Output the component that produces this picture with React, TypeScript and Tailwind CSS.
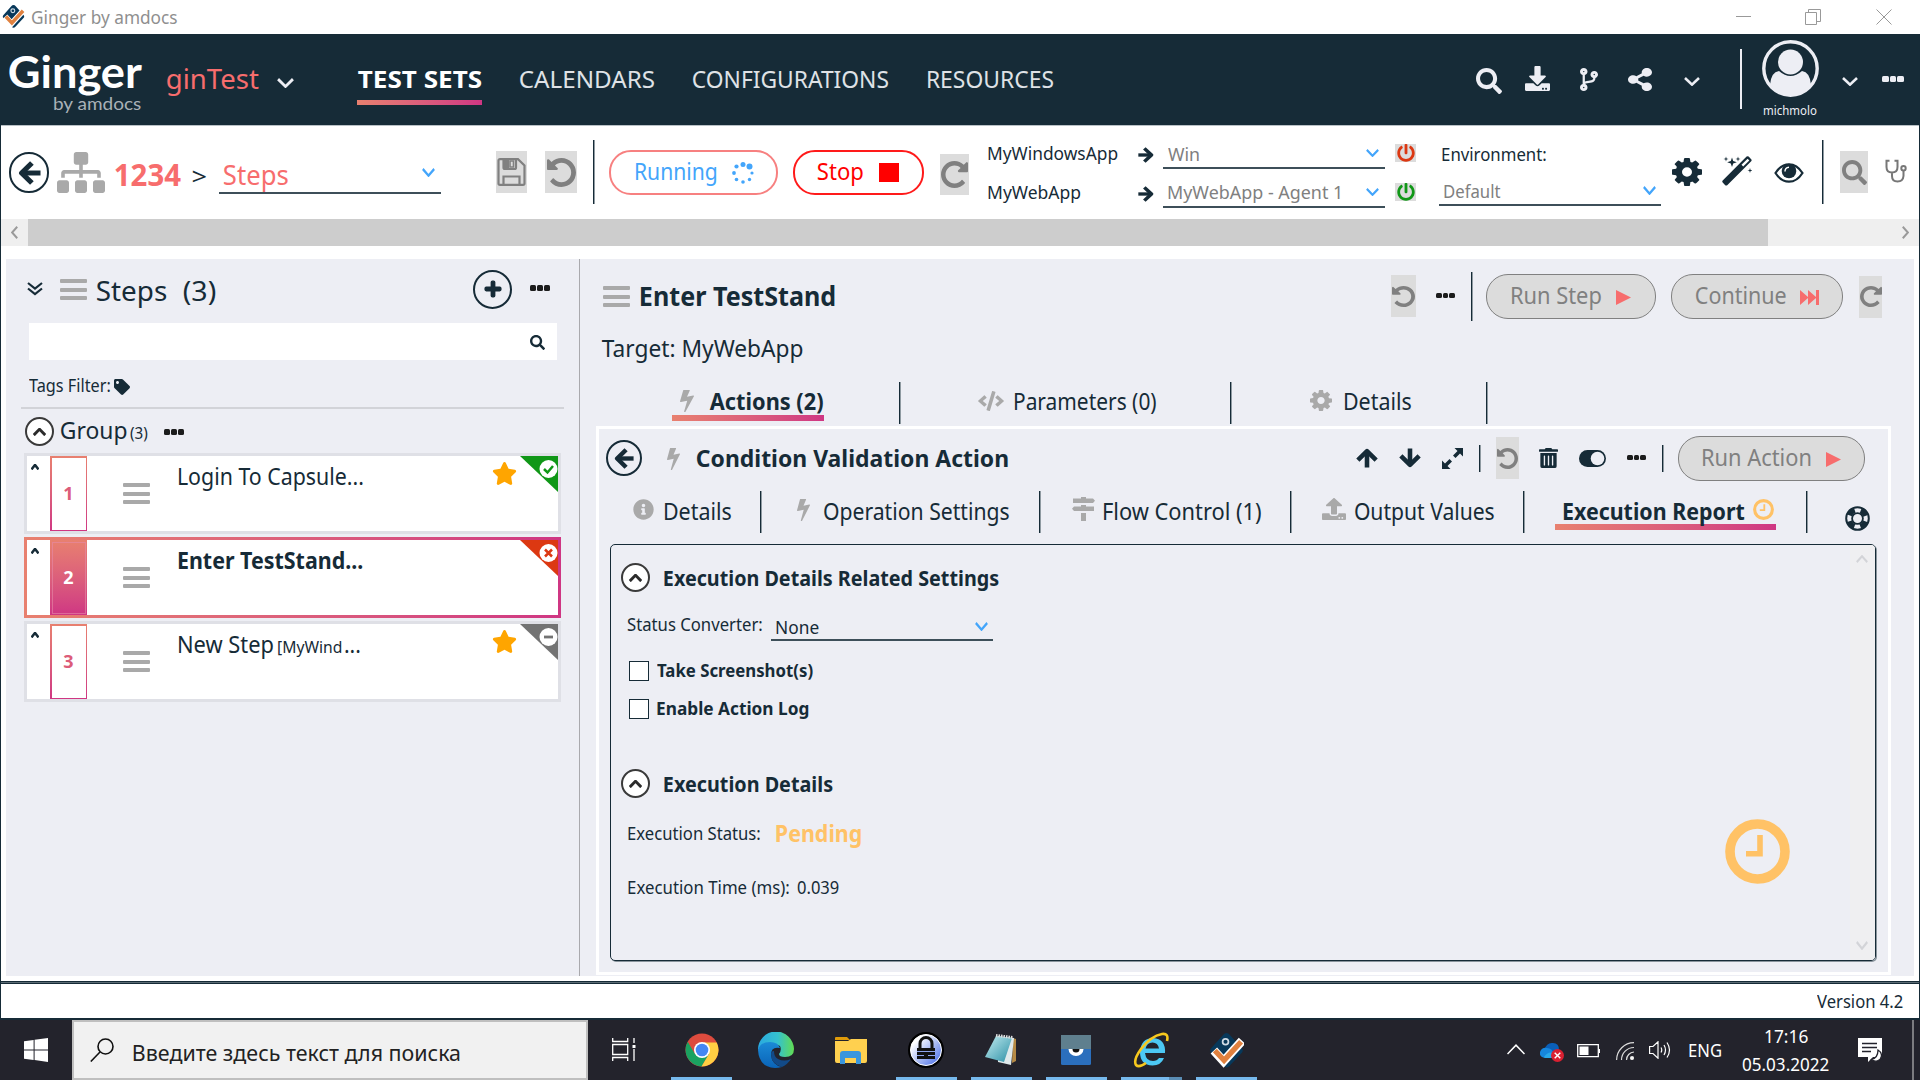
import { useLayoutEffect, useRef, type ReactNode } from "react";
import {
  FaCode, FaCodeBranch, FaDownload, FaInfoCircle,
  FaPlus, FaPowerOff, FaSearch, FaShareAlt, FaSitemap, FaStar,
  FaTag, FaTrashAlt, FaUpload,
} from "react-icons/fa";

type P = { className?: string };

/* Single line of text whose glyphs span exactly the width of its box. */
function Fit({ className = "", children }: { className?: string; children: string }) {
  const box = useRef<HTMLSpanElement>(null);
  const ink = useRef<HTMLSpanElement>(null);
  useLayoutEffect(() => {
    const b = box.current, s = ink.current;
    if (!b || !s) return;
    const ctx = document.createElement("canvas").getContext("2d");
    if (!ctx) return;
    const cs = getComputedStyle(s);
    ctx.font = `${cs.fontWeight} ${cs.fontSize} ${cs.fontFamily}`;
    const m = ctx.measureText(children);
    const k = b.getBoundingClientRect().width / (m.actualBoundingBoxLeft + m.actualBoundingBoxRight);
    const nudge = parseFloat(cs.fontSize) > 19 ? 0.8 : 0;
    s.style.transform = `translate(${m.actualBoundingBoxLeft * k + nudge}px, ${nudge}px) scaleX(${k})`;
  }, [children]);
  return (
    <span ref={box} className={`block shrink-0 leading-none whitespace-nowrap ${className}`}>
      <span ref={ink} className="inline-block origin-left align-top">{children}</span>
    </span>
  );
}

function Chevron({ className = "", w = 2.6 }: P & { w?: number }) {
  return (
    <svg viewBox="0 0 16 9" preserveAspectRatio="none" className={className} fill="none" stroke="currentColor" strokeWidth={w}>
      <path d="M1 1l7 6.6L15 1" />
    </svg>
  );
}

/* Heavy arrow with rounded ends, pointing left. */
function Arrow({ className = "" }: P) {
  return (
    <svg viewBox="0 0 24 26" preserveAspectRatio="none" className={className} fill="none" stroke="currentColor" strokeWidth="5.4" strokeLinejoin="round">
      <path d="M3.500 13H23.500" /><path d="M14.500 2.200L3.800 13l10.700 10.800" />
    </svg>
  );
}

function Undo({ className = "" }: P) {
  return (
    <svg viewBox="0 128 1536 1536" preserveAspectRatio="none" className={className} fill="currentColor">
      <path d="M1536 896q0 156-61 298t-164 245-245 164-298 61q-172 0-327-72.5t-264-204.5q-7-10-6.5-22.5t8.5-20.5l137-138q10-9 25-9 16 2 23 12 73 95 179 147t225 52q104 0 198.5-40.5t163.5-109.5 109.5-163.5 40.5-198.5-40.5-198.5-109.5-163.5-163.5-109.5-198.5-40.5q-98 0-188 35.5t-160 101.5l137 138q31 30 14 69-17 40-59 40h-448q-26 0-45-19t-19-45v-448q0-42 40-59 39-17 69 14l130 129q107-101 244.5-156.5t284.5-55.5q156 0 298 61t245 164 164 245 61 298z" />
    </svg>
  );
}

function Gear({ className = "" }: P) {
  return (
    <svg viewBox="0 128 1536 1536" preserveAspectRatio="none" className={className} fill="currentColor">
      <path d="M1024 896q0-106-75-181t-181-75-181 75-75 181 75 181 181 75 181-75 75-181zm512-109v222q0 12-8 23t-20 13l-185 28q-19 54-39 91 35 50 107 138 10 12 10 25t-9 23q-27 37-99 108t-94 71q-12 0-26-9l-138-108q-44 23-91 38-16 136-29 186-7 28-36 28h-222q-14 0-24.5-8.5t-11.5-21.5l-28-184q-49-16-90-37l-141 107q-10 9-25 9-14 0-25-11-126-114-165-168-7-10-7-23 0-12 8-23 15-21 51-66.5t54-70.5q-27-50-41-99l-183-27q-13-2-21-12.5t-8-23.5v-222q0-12 8-23t19-13l186-28q14-46 39-92-40-57-107-138-10-12-10-24 0-10 9-23 26-36 98.5-107.5t94.5-71.5q13 0 26 10l138 107q44-23 91-38 16-136 29-186 7-28 36-28h222q14 0 24.5 8.5t11.5 21.5l28 184q49 16 90 37l142-107q9-9 24-9 13 0 25 10 129 119 165 170 7 8 7 22 0 12-8 23-15 21-51 66.5t-54 70.5q26 50 41 98l183 28q13 2 21 12.5t8 23.5z" />
    </svg>
  );
}

function Bolt({ className = "" }: P) {
  return (
    <svg viewBox="0 128 896 1664" preserveAspectRatio="none" className={className} fill="#a9a9a9">
      <path d="M885 566q18 20 7 44l-540 1157q-13 25-42 25-4 0-14-2-17-5-25.5-19t-4.5-30l197-808-406 101q-4 1-12 1-18 0-31-11-18-15-13-39l201-825q4-16 18-26t32-10h328q19 0 32 12.5t13 29.5q0 8-5 18l-171 463 396-98q8-2 12-2 19 0 34 15z" />
    </svg>
  );
}

function Wand({ className = "" }: P) {
  return (
    <svg viewBox="0 0 30 30" className={className} fill="currentColor">
      <path d="M24.600.6Q25.600-.3 26.600.6L29.200 3.200Q30.100 4.200 29.200 5.200L5.200 29.200Q4.200 30 3.200 29.200L.7 26.600Q-.2 25.600.7 24.600ZM25.600 2.700L19.500 8.800L21.200 10.500L27.300 4.400Z" fillRule="evenodd" />
      <path d="M10 1.500l1.200 3.600 3.600 1.200-3.600 1.200L10 11.100 8.800 7.500 5.200 6.300l3.600-1.200zM4 .5l.6 1.900 1.900.6-1.900.6L4 5.500l-.6-1.900L1.500 3l1.900-.6zM16 .5l.6 1.900 1.900.6-1.900.6-.6 1.900-.6-1.900-1.900-.6 1.900-.6zM28 12l.6 1.900 1.900.6-1.900.6-.6 1.900-.6-1.900-1.900-.6 1.900-.6z" />
    </svg>
  );
}

function Bars({ className = "" }: P) {
  return (
    <div className={`flex shrink-0 h-[21px] w-[27px] flex-col justify-between ${className}`}>
      <i className="h-[4px] rounded-[1px] bg-[#a9a9a9]" />
      <i className="h-[4px] rounded-[1px] bg-[#a9a9a9]" />
      <i className="h-[4px] rounded-[1px] bg-[#a9a9a9]" />
    </div>
  );
}

function Dots({ className = "" }: P) {
  return (
    <div className={`flex shrink-0 justify-between ${className}`}>
      <i className="w-[30%] rounded-[1.5px] bg-current" />
      <i className="w-[30%] rounded-[1.5px] bg-current" />
      <i className="w-[30%] rounded-[1.5px] bg-current" />
    </div>
  );
}

function Clock({ className = "" }: P) {
  return (
    <svg viewBox="0 0 65 65" className={className} fill="none" stroke="#ffc266">
      <circle cx="32.5" cy="32.5" r="27.5" strokeWidth="9.6" />
      <path d="M35 16v18.7H21" strokeWidth="5.6" />
    </svg>
  );
}

function Collapse({ className = "" }: P) {
  return (
    <div className={`flex size-[29px] shrink-0 items-center justify-center rounded-full border-2 border-[#3a3a3a] bg-white text-[#2b2b2b] ${className}`}>
      <Chevron className="h-[8px] w-[13px] rotate-180" w={3.4} />
    </div>
  );
}

function Div({ className = "" }: P) {
  return <div className={`w-[2px] shrink-0 border-l border-[#162b37] bg-[#8f9aa1] ${className}`} />;
}

function Grey({ className = "", children }: P & { children: ReactNode }) {
  return <div className={`flex shrink-0 items-center justify-center bg-[#dcdcdc] text-[#808080] ${className}`}>{children}</div>;
}

function Play({ className = "" }: P) {
  return <svg viewBox="0 0 15 15" className={`h-[15px] w-[15px] ${className}`} fill="#f76d6d"><path d="M0 0l15 7.5L0 15z" /></svg>;
}

function GingerMark({ className = "" }: P) {
  return (
    <svg viewBox="0 0 36 36" className={className}>
      <path d="M18 0Q20 0 21.500 2L34 16Q35.500 18 34 20L21 34Q18 37 15 34L2 20Q.5 18 2 16L14.500 2Q16 0 18 0Z" fill="#07385a" />
      <path d="M5 18l10 11L34 8" fill="none" stroke="#fff" strokeWidth="9" />
      <path d="M6 18l9.500 10L33 9" fill="none" stroke="#e0813f" strokeWidth="5.500" />
      <circle cx="17" cy="9" r="3" fill="none" stroke="#cfdbe5" strokeWidth="1.800" />
    </svg>
  );
}

function Target({ app, labelClass, value, valueClass, gap, power }: { app: string; labelClass: string; value: string; valueClass: string; gap: string; power: string }) {
  return (
    <div className="flex h-[38.5px] items-start">
      <div className="w-[150px] shrink-0"><Fit className={`mt-[2px] text-[18px] ${labelClass}`}>{app}</Fit></div>
      <Arrow className="mt-[5px] h-[16px] w-[16px] rotate-180" />
      <div className="ml-[9px] flex h-[27px] w-[222px] shrink-0 border-b-2 border-[#3d4f59]">
        <Fit className={`mt-[2.5px] ml-[5px] text-[18px] text-[#808080] ${valueClass}`}>{value}</Fit>
        <Chevron className={`mt-[7px] h-[8px] w-[13px] text-[#43a5fb] ${gap}`} />
      </div>
      <Grey className="mt-[2px] ml-[10px] h-[18px] w-[21px]"><FaPowerOff className={`size-[18px] ${power}`} /></Grey>
    </div>
  );
}

function StepCard({ n, active, badge, children, mark, star }: { n: string; active?: boolean; badge: string; children: ReactNode; mark: ReactNode; star?: boolean }) {
  return (
    <div className={`h-[81px] w-[537px] p-[3px] ${active ? "bg-linear-to-r from-[#e8806f] to-[#cf3683]" : "bg-[#dfe0e6]"}`}>
      <div className="flex h-full items-start bg-white">
        <Chevron className="mt-[8px] ml-[4px] h-[6px] w-[8px] rotate-180" w={4.5} />
        <div className="ml-[11px] h-[75px] w-[37px] shrink-0 bg-linear-to-b from-[#e8806f] to-[#cf3683] p-[1.5px]">
          <div className={`flex h-full items-center justify-center pb-[2px] ${active ? "border border-[#e68aa8]/60" : "bg-white"}`}>
            <span className={`text-[18px] leading-none font-bold ${active ? "text-white" : "text-[#dc5c79]"}`}>{n}</span>
          </div>
        </div>
        <Bars className="mt-[27px] ml-[36px]" />
        <div className="mt-[7.6px] ml-[28px] flex w-[184px] shrink-0">{children}</div>
        {star && <FaStar className="mt-[6px] ml-[130px] h-[23px] w-[25px] text-[#ffa500]" preserveAspectRatio="none" />}
        <svg viewBox="0 0 38 36" className={`ml-auto h-[36px] w-[38px] ${badge}`} fill="currentColor">
          <path d="M0 0h38v36z" />
          <circle cx="28.500" cy="13" r="9" fill="#fff" />
          {mark}
        </svg>
      </div>
    </div>
  );
}

function TaskItem({ className = "", bar = "bg-[#76b9ed]", children }: P & { bar?: string; children: ReactNode }) {
  return (
    <div className={`flex h-[60px] w-[61px] shrink-0 flex-col items-center ${className}`}>
      <div className="flex h-[57px] items-center pt-[3px]">{children}</div>
      <div className={`h-[3px] w-full ${bar}`} />
    </div>
  );
}

function TitleBar() {
  return (
    <div className="flex h-[34px] items-start bg-white">
      <GingerMark className="mt-[5px] ml-[2px] size-[23px]" />
      <Fit className="mt-[8px] ml-[6.5px] w-[145px] text-[18px] text-[#8f8f8f]">Ginger by amdocs</Fit>
      <i className="mt-[16px] ml-auto h-[1px] w-[15px] bg-[#999]" />
      <svg viewBox="0 0 16 16" className="mt-[9px] ml-[54px] size-[16px]" fill="none" stroke="#999"><path d="M.5 3.500h11v12H.5zM3.500 3V.5h12v12H12" /></svg>
      <svg viewBox="0 0 16 16" className="mt-[9px] mr-[28px] ml-[55px] size-[16px]" fill="none" stroke="#999"><path d="M.5.5l15 15M15.500.5l-15 15" /></svg>
    </div>
  );
}

function Header() {
  return (
    <header className="flex h-[91px] items-start bg-[#162b37] text-[#edeef4]">
      <div className="ml-[8px] w-[133px] shrink-0 font-['Lato']">
        <Fit className="mt-[15px] h-[41px] w-[133px] text-[43px] font-bold text-white">Ginger</Fit>
        <Fit className="mt-[4px] ml-[46px] w-[88px] text-[18px] text-[#a9b1b7]">by amdocs</Fit>
      </div>
      <Fit className="mt-[29px] ml-[25px] w-[92px] text-[28px] text-[#f76d6d]">ginTest</Fit>
      <Chevron className="mt-[44px] ml-[19px] h-[10px] w-[17px]" />
      <div className="ml-[63px] w-[125px] shrink-0">
        <Fit className="mt-[32px] w-[124px] text-[24px] font-bold text-white">TEST SETS</Fit>
        <div className="mt-[10px] h-[5px] bg-linear-to-r from-[#e8806f] to-[#cf3683]" />
      </div>
      <Fit className="mt-[32px] ml-[37px] w-[135px] text-[24px] text-[#dfe2e6]">CALENDARS</Fit>
      <Fit className="mt-[32px] ml-[38px] w-[196px] text-[24px] text-[#dfe2e6]">CONFIGURATIONS</Fit>
      <Fit className="mt-[32px] ml-[39px] w-[126px] text-[24px] text-[#dfe2e6]">RESOURCES</Fit>
      <FaSearch className="mt-[34px] ml-[423px] size-[26px]" />
      <FaDownload className="mt-[32px] ml-[23px] size-[25px]" />
      <FaCodeBranch className="mt-[34px] ml-[30px] h-[23px] w-[18px]" preserveAspectRatio="none" />
      <FaShareAlt className="mt-[34px] ml-[30px] h-[23px] w-[24px]" preserveAspectRatio="none" />
      <Chevron className="mt-[43px] ml-[32px] h-[9px] w-[16px]" />
      <div className="mt-[15px] ml-[40px] h-[60px] w-[2px] shrink-0 bg-[#edeef4]" />
      <div className="mt-[6px] ml-[20px] w-[57px] shrink-0">
        <svg viewBox="0 0 57 57" className="size-[57px]">
          <circle cx="28.500" cy="28.500" r="26.700" fill="none" stroke="#edeef4" strokeWidth="3.400" />
          <path d="M8 45Q9 32 17 31Q28.500 41 40 31Q48 32 49 45Q41 55 28.500 55T8 45Z" fill="#edeef4" />
          <circle cx="28.500" cy="22" r="12.500" fill="#edeef4" />
        </svg>
        <Fit className="mt-[6.5px] ml-[2px] w-[53px] text-[13px]">michmolo</Fit>
      </div>
      <Chevron className="mt-[43px] ml-[23px] h-[9px] w-[16px]" />
      <Dots className="mt-[42px] ml-[24px] h-[6px] w-[22px]" />
    </header>
  );
}

function Toolbar() {
  return (
    <div className="flex h-[94px] items-start bg-white shadow-[inset_0_1px_0_#b9c1c6]">
      <div className="mt-[27px] ml-[8px] flex h-[41px] w-[40px] shrink-0 items-center justify-center rounded-full border-2 border-[#162b37]">
        <Arrow className="h-[24px] w-[23px]" />
      </div>
      <FaSitemap className="mt-[27px] ml-[8px] h-[41px] w-[48px] text-[#a9a9a9]" preserveAspectRatio="none" />
      <Fit className="mt-[34px] ml-[9px] w-[66px] text-[30px] font-bold text-[#f76d6d]">1234</Fit>
      <Fit className="mt-[39px] ml-[12px] w-[13px] text-[23px]">&gt;</Fit>
      <div className="mt-[30px] ml-[14px] flex h-[39px] w-[222px] shrink-0 border-b-2 border-[#3d4f59]">
        <Fit className="mt-[5px] ml-[4px] w-[64px] text-[27px] text-[#f76d6d]">Steps</Fit>
        <Chevron className="mt-[13px] ml-[135px] h-[9px] w-[13px] text-[#43a5fb]" />
      </div>
      <Grey className="mt-[26px] ml-[55px] h-[42px] w-[31px]">
        <svg viewBox="0 0 29 28" className="h-[28px] w-[29px]" fill="none" stroke="currentColor" strokeWidth="2.200">
          <path d="M1.500 2.500Q1.500 1.200 3 1.200H21L27.500 7.500V25.500Q27.500 26.800 26 26.800H3Q1.500 26.800 1.500 25.500Z" />
          <path d="M6.500 26.500V18.500H22.500V26.500M6.500 1.500V9.500Q6.500 11 8 11H17.500Q19 11 19 9.500V1.500" />
          <path d="M13 3h3.500v6H13z" fill="#dcdcdc" strokeWidth="1.600" /><path d="M7 2h5v8H7z" fill="currentColor" stroke="none" />
        </svg>
      </Grey>
      <Grey className="mt-[26px] ml-[18px] h-[42px] w-[32px]"><Undo className="h-[29px] w-[29px]" /></Grey>
      <Div className="mt-[15px] ml-[16px] h-[64px]" />
      <div className="mt-[25px] ml-[14px] flex h-[45px] w-[169px] shrink-0 items-start rounded-[22px] border-2 border-[#f78080] text-[#43a5fb]">
        <Fit className="mt-[7px] ml-[24px] w-[81px] text-[23px]">Running</Fit>
        <svg viewBox="-11 -11 22 22" className="mt-[10px] ml-[16px] size-[22px]" fill="currentColor">
          <circle cy="-8.500" r="2.500" /><circle cx="6.500" cy="-6.500" r="3" /><circle cx="9" r="1.600" /><circle cx="6.500" cy="6.500" r="1.700" />
          <circle cy="9" r="1.800" /><circle cx="-6.500" cy="6.500" r="1.800" /><circle cx="-9" r="1.900" /><circle cx="-6.500" cy="-6.500" r="2.100" />
        </svg>
      </div>
      <div className="mt-[25px] ml-[15px] flex h-[45px] w-[131px] shrink-0 items-start rounded-[22px] border-2 border-[#ff1a1a] text-[#f00]">
        <Fit className="mt-[7px] ml-[22px] w-[45px] text-[23px]">Stop</Fit>
        <i className="mt-[11px] ml-[17px] h-[19px] w-[20px] bg-[#f00]" />
      </div>
      <Grey className="mt-[29px] ml-[16px] h-[41px] w-[29px]"><Undo className="h-[27px] w-[27px] -scale-x-100" /></Grey>
      <div className="mt-[17px] ml-[19px] w-[428px] shrink-0">
        <Target app="MyWindowsApp" labelClass="w-[130px]" value="Win" valueClass="w-[31px]" gap="ml-[167px]" power="text-[#dc3812]" />
        <Target app="MyWebApp" labelClass="w-[93px]" value="MyWebApp - Agent 1" valueClass="w-[172px]" gap="ml-[26px]" power="text-[#109717]" />
      </div>
      <div className="ml-[23px] w-[222px] shrink-0">
        <Fit className="mt-[20px] ml-[3px] w-[104px] text-[18px]">Environment:</Fit>
        <div className="mt-[16px] flex h-[27px] border-b-2 border-[#3d4f59]">
          <Fit className="mt-[3px] ml-[5px] w-[57px] text-[18px] text-[#808080]">Default</Fit>
          <Chevron className="mt-[7px] ml-[142px] h-[9px] w-[13px] text-[#43a5fb]" />
        </div>
      </div>
      <Gear className="mt-[33px] ml-[11px] h-[28px] w-[30px]" />
      <Wand className="mt-[31px] ml-[20px] size-[30px]" />
      <svg viewBox="0 0 30 20" className="mt-[38px] ml-[22px] h-[20px] w-[30px]">
        <path d="M1.500 10Q7 1.300 15 1.300T28.500 10Q23 18.700 15 18.700T1.500 10Z" fill="none" stroke="#162b37" strokeWidth="2.200" />
        <circle cx="15" cy="8" r="7.300" fill="#162b37" /><path d="M11 8.500Q11 4.500 15 4.200" stroke="#fff" strokeWidth="1.400" fill="none" />
      </svg>
      <Div className="mt-[15px] ml-[18px] h-[64px]" />
      <Grey className="mt-[26px] ml-[16px] h-[42px] w-[28px]"><FaSearch className="size-[25px]" /></Grey>
      <svg viewBox="0 0 22 24" className="mt-[34px] ml-[17px] h-[24px] w-[22px] text-[#777]" fill="none" stroke="currentColor" strokeWidth="2">
        <path d="M4.500 1.700H1.500V8Q1.500 13.500 7 13.500T12.500 8V1.700H9.500M7 13.500V17Q7 22.500 12.500 22.500T18.500 17V11.500" />
        <circle cx="18.500" cy="9.300" r="2.200" />
      </svg>
    </div>
  );
}

function ScrollStrip() {
  return (
    <div className="flex h-[27px] items-center bg-[#efefef] text-[#9a9a9a]">
      <Chevron className="ml-[7px] h-[7px] w-[13px] rotate-90" />
      <div className="ml-[7px] h-full w-[1740px] shrink-0 bg-[#cdcdcd]" />
      <Chevron className="ml-[131px] h-[7px] w-[13px] -rotate-90" />
    </div>
  );
}

function StepsPanel() {
  return (
    <section className="h-[717px] w-[573px] shrink-0">
      <div className="flex h-[64px] items-start">
        <svg viewBox="0 0 16 14" className="mt-[23px] ml-[21px] h-[14px] w-[16px]" fill="none" stroke="currentColor" strokeWidth="2.200"><path d="M1 1l7 5.500L15 1M1 6.500L8 12l7-5.500" /></svg>
        <Bars className="mt-[20px] ml-[17px]" />
        <Fit className="mt-[15.500px] ml-[9px] w-[70px] text-[28px]">Steps</Fit>
        <Fit className="mt-[15.500px] ml-[17px] w-[32px] text-[28px]">(3)</Fit>
        <div className="mt-[10.500px] ml-[258px] flex h-[39px] w-[39px] shrink-0 items-center justify-center rounded-full border-2 border-[#162b37]">
          <FaPlus className="size-[18px]" stroke="currentColor" strokeWidth="40" />
        </div>
        <Dots className="mt-[26px] ml-[18px] h-[6px] w-[20px] text-[#1c1c1c]" />
      </div>
      <div className="ml-[23px] flex h-[37px] w-[528px] bg-white"><FaSearch className="mt-[12px] ml-[501px] size-[15px]" /></div>
      <div className="flex h-[47px] items-start">
        <Fit className="mt-[16px] ml-[23px] w-[81px] text-[18px]">Tags Filter:</Fit>
        <FaTag className="mt-[19px] ml-[4px] size-[16px]" />
      </div>
      <div className="ml-[15px] h-[2px] w-[543px] bg-[#d2d3d8]" />
      <div className="flex h-[44px] items-start">
        <Collapse className="mt-[8px] ml-[19px]" />
        <Fit className="mt-[8px] ml-[6px] w-[66px] text-[24px]">Group</Fit>
        <Fit className="mt-[15.5px] ml-[4px] w-[18px] text-[16px]">(3)</Fit>
        <Dots className="mt-[20px] ml-[16px] h-[6px] w-[20px] text-[#1c1c1c]" />
      </div>
      <div className="ml-[18px] flex flex-col gap-[3px]">
        <StepCard n="1" badge="text-[#109717]" star mark={<path d="M24 13l3.500 3.500L33 10" fill="none" stroke="#109717" strokeWidth="2.500" />}>
          <Fit className="w-[184px] text-[23px]">Login To Capsule...</Fit>
        </StepCard>
        <StepCard n="2" active badge="text-[#dc3812]" mark={<path d="M25 9.500l7 7M32 9.500l-7 7" stroke="#dc3812" strokeWidth="2.500" />}>
          <Fit className="w-[184px] text-[23px] font-bold">Enter TestStand...</Fit>
        </StepCard>
        <StepCard n="3" badge="text-[#737373]" star mark={<path d="M24 13h9" stroke="#737373" strokeWidth="2.800" />}>
          <Fit className="w-[94px] text-[23px]">New Step</Fit>
          <Fit className="mt-[6px] ml-[6px] w-[64px] text-[17px]">[MyWind</Fit>
          <Fit className="ml-[2px] w-[15px] text-[23px]">...</Fit>
        </StepCard>
      </div>
    </section>
  );
}

function Report() {
  return (
    <div className="ml-[10.500px] flex h-[417px] w-[1266px] rounded-[5px] border border-[#162b37] shadow-[1px_1px_0_#8a959d]">
      <div className="w-[1114px] shrink-0">
        <div className="flex h-[60px] items-start">
          <Collapse className="mt-[18px] ml-[10px]" />
          <Fit className="mt-[22.4px] ml-[13.500px] w-[335px] text-[20.5px] font-bold">Execution Details Related Settings</Fit>
        </div>
        <div className="flex h-[56px] items-start">
          <Fit className="mt-[10px] ml-[16px] w-[135px] text-[18px]">Status Converter:</Fit>
          <div className="ml-[9px] flex h-[36px] w-[222px] shrink-0 border-b-2 border-[#3d4f59]">
            <Fit className="mt-[13px] ml-[5px] w-[43px] text-[18px]">None</Fit>
            <Chevron className="mt-[17px] ml-[156px] h-[9px] w-[13px] text-[#43a5fb]" />
          </div>
        </div>
        <div className="flex h-[38px] items-start">
          <div className="ml-[18px] size-[20px] shrink-0 border-[1.5px] border-[#162b37] bg-white" />
          <Fit className="ml-[8px] w-[156px] text-[18px] font-bold">Take Screenshot(s)</Fit>
        </div>
        <div className="flex h-[38px] items-start">
          <div className="ml-[18px] size-[20px] shrink-0 border-[1.5px] border-[#162b37] bg-white" />
          <Fit className="ml-[8px] w-[152px] text-[18px] font-bold">Enable Action Log</Fit>
        </div>
        <div className="mt-[14px] flex h-[60px] items-start">
          <Collapse className="mt-[18px] ml-[10px]" />
          <Fit className="mt-[22.4px] ml-[13.500px] w-[169px] text-[20.5px] font-bold">Execution Details</Fit>
        </div>
        <div className="flex h-[54px] items-start">
          <Fit className="mt-[13px] ml-[17px] w-[132px] text-[18px]">Execution Status:</Fit>
          <Fit className="mt-[9.6px] ml-[15.5px] w-[85px] text-[23px] font-bold text-[#ffc266]">Pending</Fit>
        </div>
        <div className="flex items-start">
          <Fit className="mt-[13px] ml-[17px] w-[161px] text-[18px]">Execution Time (ms):</Fit>
          <Fit className="mt-[13px] ml-[8.5px] w-[42px] text-[18px]">0.039</Fit>
        </div>
      </div>
      <Clock className="mt-[274px] size-[65px]" />
      <div className="ml-[60px] flex flex-1 flex-col items-center justify-between rounded-r-[4px] bg-[#efeff1] py-[10px] text-[#d3d4d8]">
        <Chevron className="h-[8px] w-[12px] rotate-180" />
        <Chevron className="h-[9px] w-[12px]" />
      </div>
    </div>
  );
}

function Details() {
  return (
    <section className="h-[717px] w-[1335px] shrink-0 border-l border-[#a9a9ad]">
      <div className="flex h-[66px] items-start">
        <Bars className="mt-[27px] ml-[23px]" />
        <Fit className="mt-[22.5px] ml-[10px] w-[194px] text-[26px] font-bold">Enter TestStand</Fit>
        <Grey className="mt-[16px] ml-[557px] h-[42px] w-[25px]"><Undo className="h-[21px] w-[23px]" /></Grey>
        <Dots className="mt-[34px] ml-[20px] h-[5px] w-[19px] text-[#1c1c1c]" />
        <Div className="mt-[13px] ml-[16px] h-[49px]" />
        <div className="mt-[15px] ml-[13px] flex h-[45px] w-[170px] shrink-0 items-start rounded-[22px] border-[1.5px] border-[#808080] bg-[#dcdcdc]">
          <Fit className="mt-[8px] ml-[24px] w-[89px] text-[23px] text-[#808080]">Run Step</Fit>
          <Play className="mt-[15px] ml-[16px]" />
        </div>
        <div className="mt-[15px] ml-[15px] flex h-[45px] w-[172px] shrink-0 items-start rounded-[22px] border-[1.5px] border-[#808080] bg-[#dcdcdc]">
          <Fit className="mt-[8px] ml-[23px] w-[90px] text-[23px] text-[#808080]">Continue</Fit>
          <svg viewBox="0 0 19 15" className="mt-[15px] ml-[15px] h-[15px] w-[19px]" fill="#f76d6d"><path d="M0 0l8 7V0l8 7V0h3v15h-3V8l-8 7V8l-8 7z" /></svg>
        </div>
        <Grey className="mt-[16.5px] ml-[16px] h-[42px] w-[23px]"><Undo className="h-[21px] w-[22px] -scale-x-100" /></Grey>
      </div>
      <div className="flex h-[57px] items-start">
        <Fit className="mt-[9.7px] ml-[21px] w-[201px] text-[24px]">Target: MyWebApp</Fit>
      </div>
      <div className="flex h-[44px] items-start">
        <div className="ml-[92px] w-[152px] shrink-0">
          <div className="flex h-[33px] items-start">
            <Bolt className="mt-[8px] ml-[8px] h-[22px] w-[14px]" />
            <Fit className="mt-[6.6px] ml-[15px] w-[113px] text-[23px] font-bold">Actions (2)</Fit>
          </div>
          <div className="h-[6px] bg-linear-to-r from-[#e8806f] to-[#cf3683]" />
        </div>
        <Div className="ml-[75px] h-[42px]" />
        <FaCode className="mt-[9px] ml-[77px] h-[20px] w-[26px] text-[#a9a9a9]" preserveAspectRatio="none" />
        <Fit className="mt-[6.6px] ml-[10px] w-[141px] text-[23px]">Parameters (0)</Fit>
        <Div className="ml-[75px] h-[42px]" />
        <Gear className="mt-[8px] ml-[78px] h-[21px] w-[22px] text-[#a9a9a9]" />
        <Fit className="mt-[6.6px] ml-[12px] w-[66px] text-[23px]">Details</Fit>
        <Div className="ml-[76px] h-[42px]" />
      </div>
      <div className="ml-[16px] h-[549px] w-[1295px] border-[3px] border-white">
        <div className="flex h-[62px] items-start">
          <div className="mt-[11px] ml-[7px] flex size-[36px] shrink-0 items-center justify-center rounded-full border-2 border-[#162b37]">
            <Arrow className="h-[21px] w-[20px]" />
          </div>
          <Bolt className="mt-[19px] ml-[25px] h-[22px] w-[13px]" />
          <Fit className="mt-[16.7px] ml-[16px] w-[311px] text-[23.5px] font-bold">Condition Validation Action</Fit>
          <Arrow className="mt-[18px] ml-[350px] h-[22px] w-[20px] rotate-90" />
          <Arrow className="mt-[18px] ml-[23px] h-[22px] w-[20px] -rotate-90" />
          <svg viewBox="0 0 21 21" className="mt-[19px] ml-[22px] size-[21px]" fill="currentColor">
            <path d="M12.500 0h8.500v8.500l-3-3-4.500 4.500-2.500-2.500L15.500 3zM8.500 21H0v-8.500l3 3 4.500-4.500 2.500 2.500L5.500 18z" />
          </svg>
          <Div className="mt-[16px] ml-[16px] h-[27px]" />
          <Grey className="mt-[8px] ml-[15px] h-[42px] w-[23px]"><Undo className="h-[21px] w-[21px]" /></Grey>
          <FaTrashAlt className="mt-[19px] ml-[20px] h-[20px] w-[19px]" preserveAspectRatio="none" />
          <svg viewBox="0 0 27 17" className="mt-[21px] ml-[21px] h-[17px] w-[27px]">
            <rect width="27" height="17" rx="8.500" fill="#162b37" /><circle cx="18.500" cy="8.500" r="6.800" fill="#edeef4" />
          </svg>
          <Dots className="mt-[26px] ml-[21px] h-[5px] w-[19px] text-[#1c1c1c]" />
          <Div className="mt-[16px] ml-[16px] h-[27px]" />
          <div className="mt-[7px] ml-[14px] flex h-[45px] w-[187px] shrink-0 items-start rounded-[22px] border-[1.5px] border-[#808080] bg-[#dcdcdc]">
            <Fit className="mt-[8px] ml-[23px] w-[108px] text-[23px] text-[#808080]">Run Action</Fit>
            <Play className="mt-[15px] ml-[16px]" />
          </div>
        </div>
        <div className="flex h-[53px] items-start">
          <FaInfoCircle className="mt-[8px] ml-[34px] size-[21px] text-[#a9a9a9]" />
          <Fit className="mt-[7.6px] ml-[10px] w-[66px] text-[23px]">Details</Fit>
          <Div className="ml-[30px] h-[42px]" />
          <Bolt className="mt-[8px] ml-[35px] h-[22px] w-[13px]" />
          <Fit className="mt-[7.6px] ml-[13px] w-[185px] text-[23px]">Operation Settings</Fit>
          <Div className="ml-[31px] h-[42px]" />
          <svg viewBox="0 0 23 24" className="mt-[6px] ml-[31px] h-[24px] w-[23px]" fill="#a9a9a9">
            <path d="M9 0h5v1.500h7l2 2.200L21 6H1V1.500h8zM9 8h5v1.500h8V14H2L0 11.700 2 9.500h7zM9 16h5v8H9z" />
          </svg>
          <Fit className="mt-[7.6px] ml-[8px] w-[157px] text-[23px]">Flow Control (1)</Fit>
          <Div className="ml-[30px] h-[42px]" />
          <FaUpload className="mt-[7px] ml-[30px] h-[22px] w-[24px] text-[#a9a9a9]" preserveAspectRatio="none" />
          <Fit className="mt-[7.6px] ml-[7.5px] w-[139px] text-[23px]">Output Values</Fit>
          <Div className="ml-[30.5px] h-[42px]" />
          <div className="ml-[30px] w-[221px] shrink-0">
            <div className="flex h-[33px] items-start">
              <Fit className="mt-[7.6px] ml-[8px] w-[181px] text-[23px] font-bold">Execution Report</Fit>
              <Clock className="mt-[8px] ml-[9px] size-[21px]" />
            </div>
            <div className="h-[6px] bg-linear-to-r from-[#e8806f] to-[#cf3683]" />
          </div>
          <Div className="ml-[30px] h-[42px]" />
          <svg viewBox="-12.5 -12.5 25 25" className="mt-[15px] ml-[37px] size-[25px]" fill="none" stroke="#162b37">
            <circle r="11.300" strokeWidth="2" /><circle r="5.400" strokeWidth="1.800" />
            <circle r="8.500" strokeWidth="5" strokeDasharray="7.350 6" strokeDashoffset="-3" />
          </svg>
        </div>
        <Report />
      </div>
    </section>
  );
}

function Taskbar() {
  return (
    <footer className="flex h-[60px] items-start bg-[#23232c] text-white">
      <svg viewBox="0 0 24 24" className="mt-[18px] ml-[24px] size-[24px]" fill="#fff"><path d="M0 3.300l9.600-1.400v9.500H0zM10.600 1.700L24 0v11.400H10.600zM0 12.500h9.600v9.500L0 20.700zM10.600 12.500H24V24l-13.400-1.900z" /></svg>
      <div className="ml-[24px] flex h-[60px] w-[516px] shrink-0 items-start border-2 border-[#bfbfbf] bg-[#f1f1f1] text-[#222]">
        <svg viewBox="0 0 24 24" className="mt-[16px] ml-[16px] size-[24px]" fill="none" stroke="#111" strokeWidth="1.600"><circle cx="15.500" cy="8.500" r="7.500" /><path d="M10 14L.8 23.500" /></svg>
        <Fit className="mt-[17.5px] ml-[19px] w-[326px] text-[22px]">Введите здесь текст для поиска</Fit>
      </div>
      <svg viewBox="0 0 25 23" className="mt-[18px] ml-[24px] h-[23px] w-[25px]" fill="none" stroke="#fff" strokeWidth="1.300">
        <path d="M.7 0v3.500h15V0M.7 6.500h15v10h-15zM.7 23v-3.500h15V23M22 0v5M22 11v12" /><path d="M20.500 7h3v3h-3z" fill="#fff" stroke="none" />
      </svg>
      <TaskItem className="ml-[34px]">
        <svg viewBox="-17 -17 34 34" className="size-[34px]">
          <circle r="16.500" fill="#dd4b3e" />
          <path d="M-14.300-8.200A16.500 16.500 0 0 0-.5 16.500L7 4L-7 4Z" fill="#1aa260" />
          <path d="M14.700-7.500A16.500 16.500 0 0 1-.5 16.500L7 4L2-7.500Z" fill="#ffce43" />
          <circle r="8" fill="#fff" /><circle r="6.300" fill="#4587f3" />
        </svg>
      </TaskItem>
      <TaskItem className="ml-[13.500px]" bar="bg-transparent">
        <svg viewBox="0 0 36 36" className="size-[36px]">
          <defs>
            <linearGradient id="edgeTop"><stop offset="0" stopColor="#2aa9e0" /><stop offset=".55" stopColor="#35c1ce" /><stop offset="1" stopColor="#62dc52" /></linearGradient>
            <linearGradient id="edgeLow" x1="0" y1="0" x2="0" y2="1"><stop offset="0" stopColor="#1b8ad6" /><stop offset="1" stopColor="#0a63b8" /></linearGradient>
          </defs>
          <path d="M0 18A18 18 0 0 1 36 17Q36 25 27 25Q21 25 21 22Q24 18 22 14Q12 8 0 18Z" fill="url(#edgeTop)" />
          <path d="M0 18Q2 10 12 10Q20 10 22 16Q13 14 13 23Q14 33 24 35Q20 36 17 36Q1 35 0 18Z" fill="url(#edgeLow)" />
          <path d="M13 22Q13 32 24 35Q30 32 33 27Q26 30 20 27Q16 25 16 19Q13 19 13 22Z" fill="#124a88" />
        </svg>
      </TaskItem>
      <TaskItem className="ml-[14px]" bar="bg-transparent">
        <svg viewBox="0 0 32 27" className="h-[27px] w-[32px]">
          <path d="M0 1q0-1 1-1h11l3 3H0z" fill="#e09b0a" /><path d="M0 4h13l3-2h16v22q0 2-2 2H2q-2 0-2-2z" fill="#ffd04f" />
          <path d="M5 27V17q0-3 3-3h15q3 0 3 3v10h-5v-6H10v6z" fill="#3a96dd" />
        </svg>
      </TaskItem>
      <TaskItem className="ml-[14px]">
        <svg viewBox="0 0 36 36" className="size-[36px]">
          <defs><linearGradient id="lockBg" x1="0" y1="0" x2="1" y2="1"><stop offset="0.2" stopColor="#fff" /><stop offset="1" stopColor="#3b63e6" /></linearGradient></defs>
          <circle cx="18" cy="18" r="18" fill="#000" /><circle cx="18" cy="18" r="15.500" fill="url(#lockBg)" stroke="#fff" />
          <path d="M12 16v-4.500a6 6 0 0 1 12 0V16" fill="none" stroke="#111" strokeWidth="3" /><path d="M9 16h18v11H9z" fill="#111" />
          <path d="M9 19.500h18M9 23.500h7M20 23.500h7" stroke="#8fa5ee" />
        </svg>
      </TaskItem>
      <TaskItem className="ml-[14px]">
        <svg viewBox="0 0 34 32" className="h-[32px] w-[34px]">
          <defs><linearGradient id="notes" x1="0" y1="0" x2="1" y2="1"><stop stopColor="#c5eef2" /><stop offset="1" stopColor="#2b8fa5" /></linearGradient></defs>
          <path d="M29 4l3 1v22l-4 2z" fill="#b58a45" /><path d="M14 2l16 2-3 27-13-3z" fill="#dfe9eb" />
          <path d="M12 2l16 2-8 24-19-5z" fill="url(#notes)" /><path d="M12 1.500l17 2" stroke="#ddd" strokeWidth="3" strokeDasharray="1.500 1" />
        </svg>
      </TaskItem>
      <TaskItem className="ml-[14px]">
        <svg viewBox="0 0 30 30" className="size-[30px]">
          <rect width="30" height="30" rx="1.500" fill="#2b6fbd" /><path d="M0 0h30v14H0z" fill="#5f7f8e" />
          <path d="M7.500 14h15a7.500 7 0 0 1-15 0z" fill="#fff" /><path d="M11.500 14h7a3.500 3.500 0 0 1-7 0z" fill="#111" />
        </svg>
      </TaskItem>
      <TaskItem className="ml-[14px]" bar="bg-linear-to-r from-[#76b9ed] from-78% to-[#5a8db5] to-78%">
        <svg viewBox="0 0 36 36" className="size-[36px]" fill="none">
          <path d="M30 21H12Q13 29 20 29Q24 29 26 26H31Q28 33.500 19.500 33.500Q7 33 7 20Q8 6 20 6Q33 7 32 21ZM12.500 16.500H26Q25 10.500 19.500 10.500T12.500 16.500Z" fill="#4cc8f4" fillRule="evenodd" />
          <path d="M34 9Q36 1 29 2Q18 4 8 17Q0 28 3 33Q6 36 13 31" stroke="#f7c81e" strokeWidth="2.600" />
        </svg>
      </TaskItem>
      <TaskItem className="ml-[14px]"><GingerMark className="size-[35px]" /></TaskItem>
      <svg viewBox="0 0 18 11" className="mt-[24px] ml-[250px] h-[11px] w-[18px]" fill="none" stroke="#fff" strokeWidth="1.500"><path d="M.5 10L9 1.200 17.500 10" /></svg>
      <svg viewBox="0 0 24 20" className="mt-[22px] ml-[15px] h-[20px] w-[24px]">
        <path d="M4 8Q7 0 13 1Q19 1 19 8L19 15H5Z" fill="#0a5fb8" /><path d="M5 16Q-1 15 0 10Q2 5 7 6Q12 6 14 12V16Z" fill="#1686dd" />
        <path d="M4 15Q8 9 13 11V16H5Z" fill="#28a8ea" />
        <circle cx="17.500" cy="13.500" r="6.500" fill="#d92031" /><path d="M14.700 10.700l5.600 5.600M20.300 10.700l-5.600 5.600" stroke="#fff" strokeWidth="1.400" />
      </svg>
      <svg viewBox="0 0 23 14" className="mt-[24px] ml-[13px] h-[14px] w-[23px]"><path d="M.7.7h20.600v12H.7z" fill="none" stroke="#fff" strokeWidth="1.300" /><path d="M2.500 2.500h9v8.500h-9zM22 5h1v4h-1z" fill="#fff" /></svg>
      <svg viewBox="0 0 18 18" className="mt-[22px] ml-[16px] size-[18px]" fill="none" stroke="#ddd" strokeWidth="1.200">
        <path d="M.6 18A17.500 17.500 0 0 1 18 .6M5.500 18A12.500 12.500 0 0 1 18 5.500M10.500 18A8 8 0 0 1 18 10" /><circle cx="16" cy="16" r="1.500" fill="#fff" />
      </svg>
      <svg viewBox="0 0 22 18" className="mt-[21px] ml-[15px] h-[18px] w-[22px]" fill="none" stroke="#fff" strokeWidth="1.200">
        <path d="M.6 5.500H4L9 .8V17.200L4 12.500H.6zM12 6.500q1.500 2.500 0 5M15 4q3 5 0 10M18 1.500q5 7.500 0 15" />
      </svg>
      <Fit className="mt-[21px] ml-[18px] w-[32px] text-[18px]">ENG</Fit>
      <div className="ml-[21px] w-[87px] shrink-0">
        <Fit className="mt-[7px] ml-[23px] w-[43px] text-[18px]">17:16</Fit>
        <Fit className="mt-[10px] w-[87px] text-[18px]">05.03.2022</Fit>
      </div>
      <svg viewBox="0 0 24 24" className="mt-[18px] ml-[29px] size-[24px]">
        <path d="M0 0h24v19h-9l-5 5v-5H0z" fill="#fff" /><path d="M4 5.500h15M4 9.500h15M4 13.500h9" stroke="#23232c" strokeWidth="1.300" />
        <path d="M20 12q3.500 2 3.500 6a6 6 0 0 1-10 3.500q6.500-1.500 6.500-9.500z" fill="#fff" stroke="#23232c" strokeWidth="1.300" />
      </svg>
      <div className="ml-[30px] h-[60px] w-[2px] bg-[#7c7c80]" />
    </footer>
  );
}

export default function App() {
  return (
    <div className="h-[1080px] w-[1920px] overflow-hidden bg-white font-['Noto_Sans','Open_Sans',sans-serif] text-[#162b37] [&_svg]:shrink-0">
      <TitleBar />
      <Header />
      <div className="h-[895px] border-x border-b-2 border-[#162b37] bg-white">
        <Toolbar />
        <ScrollStrip />
        <main className="mt-[13px] ml-[5px] flex h-[717px] w-[1908px] bg-[#edeef4]">
          <StepsPanel />
          <Details />
        </main>
        <div className="mt-[5px] h-[3px] border-y border-[#162b37] bg-[#5c6b74]" />
        <div className="flex h-[34px] items-start justify-end pr-[16px]">
          <Fit className="mt-[8px] w-[86px] text-[18px]">Version 4.2</Fit>
        </div>
      </div>
      <Taskbar />
    </div>
  );
}
